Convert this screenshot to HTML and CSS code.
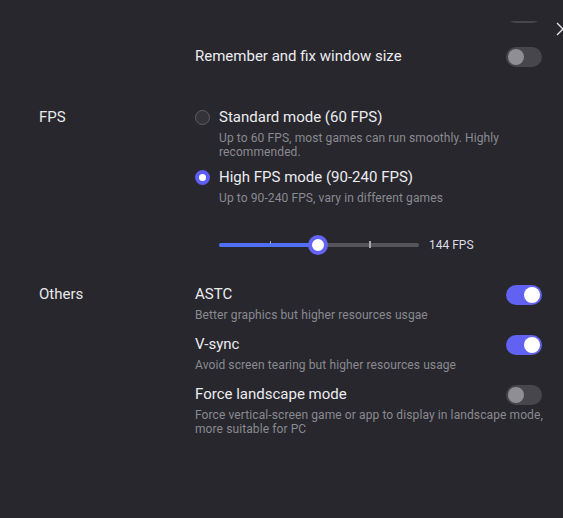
FILE: index.html
```html
<!DOCTYPE html>
<html>
<head>
<meta charset="utf-8">
<link rel="stylesheet" href="styles.css">
</head>
<body>
<div class="page">
  <svg class="close" width="14" height="14" viewBox="0 0 14 14"><path d="M1 1 L13 13 M1 13 L13 1" stroke="#e6e6ea" stroke-width="1.3" fill="none"/></svg>

  <div class="top-clip"><span class="toggle"><span class="knob"></span></span></div>

  <div class="section sec-remember">
    <div class="label"></div>
    <div class="content">
      <div class="item">
        <div class="head"><span class="title">Remember and fix window size</span><span class="toggle"><span class="knob"></span></span></div>
      </div>
    </div>
  </div>

  <div class="section sec-fps">
    <div class="label">FPS</div>
    <div class="content">
      <div class="radio-item">
        <span class="radio"></span>
        <span class="title">Standard mode (60 FPS)</span>
        <span class="desc">Up to 60 FPS, most games can run smoothly. Highly recommended.</span>
      </div>
      <div class="radio-item second">
        <span class="radio checked"></span>
        <span class="title">High FPS mode (90-240 FPS)</span>
        <span class="desc">Up to 90-240 FPS, vary in different games</span>
      </div>
      <div class="slider-row">
        <div class="slider">
          <span class="fill" style="width:100px"></span>
          <span class="tick tick-a"></span>
          <span class="tick tick-b"></span>
          <span class="thumb"></span>
        </div>
        <span class="slider-value">144 FPS</span>
      </div>
    </div>
  </div>

  <div class="section sec-others">
    <div class="label">Others</div>
    <div class="content">
      <div class="item">
        <div class="head"><span class="title">ASTC</span><span class="toggle on"><span class="knob"></span></span></div>
        <div class="desc">Better graphics but higher resources usgae</div>
      </div>
      <div class="item">
        <div class="head"><span class="title">V-sync</span><span class="toggle on"><span class="knob"></span></span></div>
        <div class="desc">Avoid screen tearing but higher resources usage</div>
      </div>
      <div class="item">
        <div class="head"><span class="title">Force landscape mode</span><span class="toggle"><span class="knob"></span></span></div>
        <div class="desc">Force vertical-screen game or app to display in landscape mode, more suitable for PC</div>
      </div>
    </div>
  </div>
</div>
</body>
</html>
```
FILE: styles.css
```css
html, body {
  margin: 0;
  padding: 0;
}
body {
  background: #27272d;
  font-family: Roboto, "Liberation Sans", sans-serif;
  color: #ececf0;
  width: 563px;
  height: 518px;
  overflow: hidden;
}
.page {
  position: relative;
  height: 518px;
  padding-left: 39px;
  box-sizing: border-box;
}
.close {
  position: absolute;
  left: 556px;
  top: 1px;
}
.top-clip {
  margin-top: 21px;
  height: 2px;
  overflow: hidden;
  display: flex;
  justify-content: flex-end;
  align-items: flex-end;
  padding-right: 21px;
}
.top-clip .toggle {
  background: #46464c;
}
.section {
  display: grid;
  grid-template-columns: 156px 1fr;
}
.label {
  font-size: 15px;
  line-height: 20px;
  color: #e8e8ec;
}
.sec-remember {
  margin-top: 23px;
}
.sec-fps {
  margin-top: 41px;
}
.sec-others {
  margin-top: 29px;
}
.item + .item {
  margin-top: 12px;
}
.head {
  display: flex;
  justify-content: space-between;
  align-items: center;
  padding-right: 21px;
  height: 20px;
}
.title {
  font-size: 15px;
  line-height: 20px;
  color: #ececf0;
}
.desc {
  display: block;
  font-size: 12px;
  line-height: 14px;
  letter-spacing: 0.1px;
  color: #8a8a90;
  margin-top: 4px;
}
.toggle {
  width: 36px;
  height: 20px;
  border-radius: 10px;
  background: #46464c;
  display: flex;
  align-items: center;
  padding: 0 2px;
  box-sizing: border-box;
  flex-shrink: 0;
  margin-top: 2px;
}
.toggle .knob {
  width: 16px;
  height: 16px;
  border-radius: 50%;
  background: #8e8e94;
}
.toggle.on {
  background: #6262f2;
  justify-content: flex-end;
}
.toggle.on .knob {
  background: #ffffff;
}
.radio-item {
  display: grid;
  grid-template-columns: 15px 1fr;
  column-gap: 9px;
  padding-right: 21px;
}
.radio-item .title {
  grid-column: 2;
  grid-row: 1;
}
.radio-item .desc {
  grid-column: 2;
  grid-row: 2;
}
.radio-item.second {
  margin-top: 8px;
}
.radio {
  grid-column: 1;
  grid-row: 1;
  align-self: center;
  width: 15px;
  height: 15px;
  border-radius: 50%;
  box-sizing: border-box;
  border: 1px solid #5e5e64;
  background: #333338;
  margin-top: 1px;
}
.radio.checked {
  border: 4px solid #5e5ef4;
  background: #ffffff;
}
.slider-row {
  display: flex;
  align-items: center;
  margin-top: 30px;
  padding-left: 24px;
  height: 20px;
}
.slider {
  position: relative;
  width: 200px;
  height: 4px;
  border-radius: 2px;
  background: #55555b;
}
.fill {
  position: absolute;
  left: 0;
  top: 0;
  height: 4px;
  border-radius: 2px;
  background: #4f6ff5;
}
.tick {
  position: absolute;
  width: 1px;
}
.tick-a {
  left: 51px;
  top: -2px;
  height: 3px;
  background: #8fa4ff;
}
.tick-b {
  left: 150px;
  top: -2px;
  height: 7px;
  width: 2px;
  background: #a8a8ae;
}
.thumb {
  position: absolute;
  left: 89px;
  top: -8px;
  width: 20px;
  height: 20px;
  border-radius: 50%;
  box-sizing: border-box;
  border: 4px solid #6464f2;
  background: #ffffff;
}
.slider-value {
  margin-left: 10px;
  font-size: 12px;
  color: #dcdce6;
}
```
